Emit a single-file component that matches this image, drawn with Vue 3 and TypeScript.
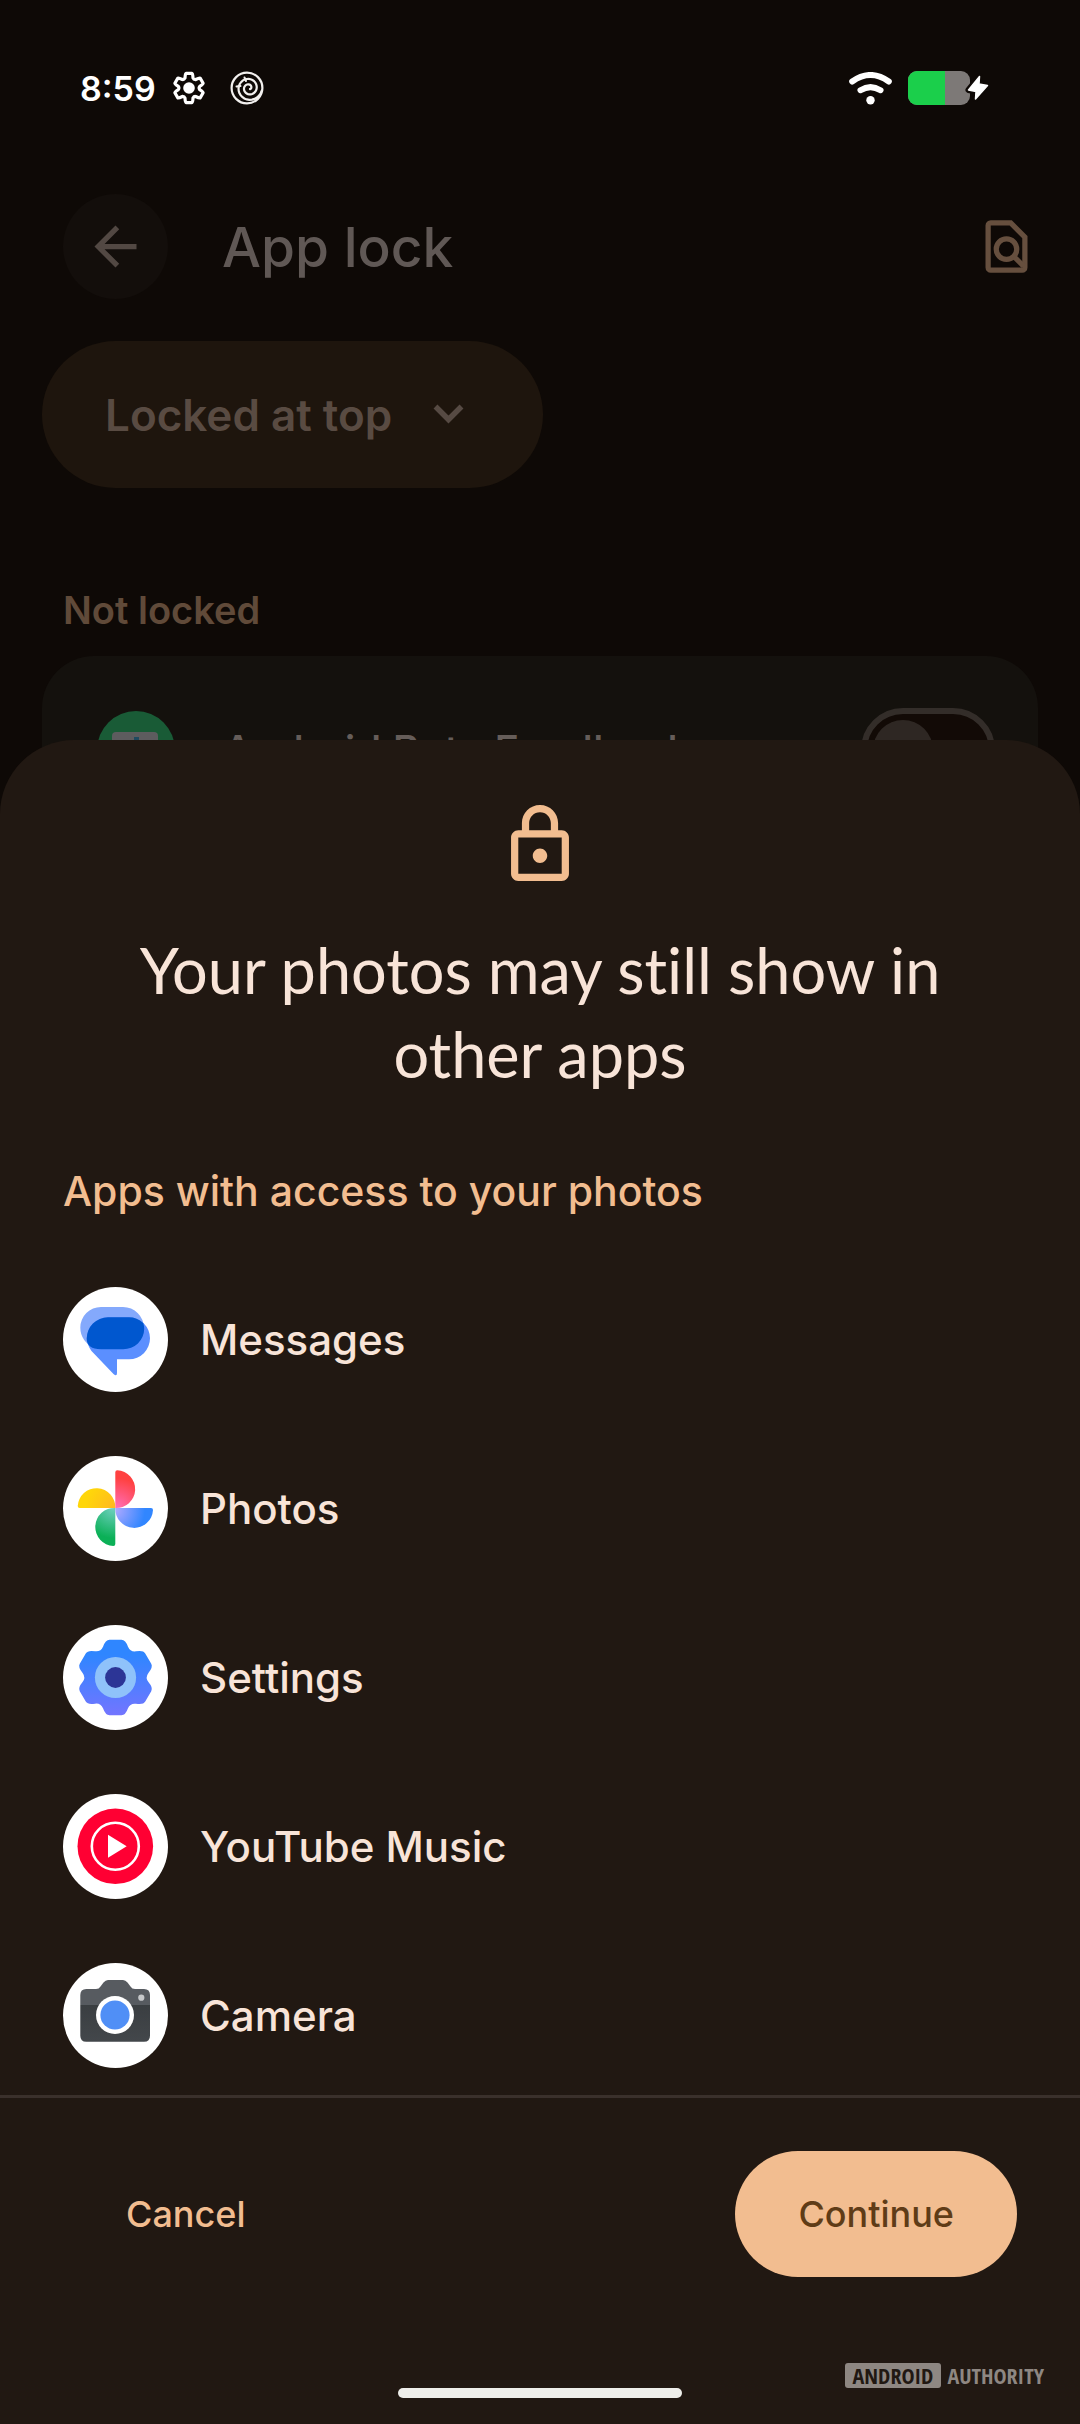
<script setup lang="ts">
import { ref } from 'vue'

type AppId = 'messages' | 'photos' | 'settings' | 'music' | 'camera'

const apps: { id: AppId; name: string }[] = [
  { id: 'messages', name: 'Messages' },
  { id: 'photos', name: 'Photos' },
  { id: 'settings', name: 'Settings' },
  { id: 'music', name: 'YouTube Music' },
  { id: 'camera', name: 'Camera' },
]

const sortOrder = ref('top')
const feedbackLocked = ref(false)

/* Six-toothed cog around (c, c); the tooth is described once and rotated. */
function cogPath(c: number, tooth: number[][]): string {
  const parts: string[] = []
  for (let k = 0; k < 6; k++) {
    const a = (k * Math.PI) / 3
    const p = tooth.map(([x, y]) => {
      const px = c + x * Math.cos(a) - y * Math.sin(a)
      const py = c + x * Math.sin(a) + y * Math.cos(a)
      return `${px.toFixed(2)} ${py.toFixed(2)}`
    })
    parts.push(`${k ? '' : `M${p[0]}`}Q${p[1]} ${p[2]}L${p[3]}Q${p[4]} ${p[5]}Q${p[6]} ${p[7]}`)
  }
  return parts.join('') + 'Z'
}

const softCog = cogPath(52.5, [
  [-12.5, -30.8], [-10, -37.8], [-6, -37.8], [6, -37.8], [10, -37.8], [12.5, -30.8], [14.75, -25.5], [20.4, -26.2],
])
const lineCog = cogPath(17, [
  [-4, -10], [-3.8, -14.6], [-3, -14.6], [3, -14.6], [3.8, -14.6], [4, -10], [4.6, -8.4], [6.66, -8.46],
])

/* Spiral that unwinds from its centre to the rim of the badge. */
const swirl = Array.from({ length: 60 }, (_, i) => {
  const t = i / 59
  const angle = 0.2 + (1 - t) * Math.PI * 4.2
  const r = 1.5 + 11.5 * t
  return `${i ? 'L' : 'M'}${(19 + r * Math.cos(angle)).toFixed(2)} ${(17 + r * Math.sin(angle)).toFixed(2)}`
}).join('')
</script>

<template>
  <div class="screen">
    <div class="page">
      <header class="status">
        <span class="clock">8:59</span>
        <svg class="cog" viewBox="0 0 34 34" aria-hidden="true">
          <path :d="lineCog" fill="none" stroke="#fff" stroke-width="3.2" stroke-linejoin="round" />
          <circle cx="17" cy="17" r="5.8" fill="#fff" />
        </svg>
        <svg class="badge" viewBox="0 0 34 34" aria-hidden="true" fill="none" stroke="#f2f0ee" stroke-linecap="round">
          <circle cx="17" cy="17" r="15.4" stroke-width="2.2" />
          <path :d="swirl" stroke-width="2.2" />
          <path d="M6.5 15.5l4-.5M14.5 6.5l1.5 3.5" stroke-width="2" />
        </svg>
        <svg class="wifi" viewBox="0 0 43 33" aria-hidden="true" fill="none" stroke="#fff" stroke-width="6" stroke-linecap="round">
          <path d="M3.2 9.5Q21.5-3.5 39.8 9.5" />
          <path d="M11.5 18.2Q21.5 12 31.5 18.2" />
          <circle cx="21.5" cy="28.3" r="4.2" fill="#fff" stroke="none" />
        </svg>
        <svg class="battery" viewBox="0 0 81 34" aria-hidden="true">
          <rect width="62" height="34" rx="9" fill="#7d7977" />
          <path d="M9 0H37V34H9A9 9 0 0 1 0 25V9A9 9 0 0 1 9 0Z" fill="#1bcf4b" />
          <path d="M71.5 5.5 60.5 19 68 20.5 67.5 28 79.5 14.5 71 13Z" fill="#0e0906" stroke="#0e0906" stroke-width="6" stroke-linejoin="round" />
          <path d="M71.5 5.5 60.5 19 68 20.5 67.5 28 79.5 14.5 71 13Z" fill="#fff" stroke="#fff" stroke-width="1.5" stroke-linejoin="round" />
        </svg>
      </header>

      <div class="toolbar">
        <button class="back" type="button" aria-label="Back">
          <svg viewBox="0 0 24 24" aria-hidden="true"><path d="M20 11H7.83l5.59-5.59L12 4l-8 8 8 8 1.41-1.41L7.83 13H20v-2z" fill="#524843" /></svg>
        </button>
        <h1 class="heading">App lock</h1>
        <button class="search" type="button" aria-label="Search in page">
          <svg viewBox="0 0 24 24" aria-hidden="true" fill="none" stroke="#664f3e" stroke-width="2">
            <path d="M6 3h7.6L19 8.400V20a1 1 0 0 1-1 1H6a1 1 0 0 1-1-1V4a1 1 0 0 1 1-1z" />
            <circle cx="12" cy="13" r="3.9" />
            <path d="M14.8 15.8 18.5 19.5" />
          </svg>
        </button>
      </div>

      <label class="sort">
        <select v-model="sortOrder" aria-label="Sort order">
          <option value="top">Locked at top</option>
        </select>
        <svg viewBox="0 0 31 21" aria-hidden="true"><path d="M2.5 2.5 15.5 15.5 28.5 2.5" fill="none" stroke="#564a43" stroke-width="5.5" /></svg>
      </label>

      <h2 class="group">Not locked</h2>
      <label class="entry">
        <svg class="entry-icon" viewBox="0 0 78 78" aria-hidden="true">
          <circle cx="39" cy="39" r="39" fill="#195b36" />
          <rect x="15" y="21" width="46" height="36" rx="4" fill="#5d5c5e" />
          <path d="M37 26h5v20h-5z" fill="#1f4a5f" />
        </svg>
        <span class="entry-name">Android Beta Feedback</span>
        <input v-model="feedbackLocked" class="toggle" type="checkbox" />
      </label>
    </div>

    <section class="sheet" role="dialog" aria-labelledby="sheet-title">
      <svg class="lock" viewBox="4 1 16 21" aria-hidden="true">
        <path d="M18 8h-1V6c0-2.76-2.24-5-5-5S7 3.24 7 6v2H6c-1.1 0-2 .9-2 2v10c0 1.1.9 2 2 2h12c1.1 0 2-.9 2-2V10c0-1.1-.9-2-2-2zM9 6c0-1.66 1.34-3 3-3s3 1.34 3 3v2H9V6zm9 14H6V10h12v10zm-6-3c1.1 0 2-.9 2-2s-.9-2-2-2-2 .9-2 2 .9 2 2 2z" fill="#f2bd90" />
      </svg>
      <h2 id="sheet-title" class="title">Your photos may still show in other apps</h2>
      <h3 class="subtitle">Apps with access to your photos</h3>

      <ul class="apps">
        <li v-for="app in apps" :key="app.id" class="app">
          <svg class="app-icon" viewBox="0 0 105 105" aria-hidden="true">
            <circle cx="52.5" cy="52.5" r="52.5" fill="#fff" />
            <g v-if="app.id === 'messages'">
              <path d="M38 20H60A21 21 0 0 1 60 62H32Q17.3 54 17.3 40.5A20.7 20.5 0 0 1 38 20Z" fill="#84a9fc" />
              <path d="M45 30.3H66A21 21 0 0 1 66 72.3H54V86Q54 90 50.5 87L28.5 64Q23.7 57 23.7 51.5A21.3 21.2 0 0 1 45 30.3Z" fill="#5b8fff" />
              <path d="M45 30.3H66Q74 30.3 80.2 36 81.3 39 81.2 42A21 20.5 0 0 1 60 62.3H38Q23.7 62 23.7 51.5A21.3 21.2 0 0 1 45 30.3Z" fill="#0057cf" />
            </g>
            <g v-else-if="app.id === 'photos'">
              <defs>
                <radialGradient id="petal-red" gradientUnits="userSpaceOnUse" cx="54" cy="52" r="30">
                  <stop offset="0" stop-color="#ff6fb8" /><stop offset="1" stop-color="#ff4141" />
                </radialGradient>
                <radialGradient id="petal-yellow" gradientUnits="userSpaceOnUse" cx="52" cy="52" r="30">
                  <stop offset="0" stop-color="#ffb81f" /><stop offset="1" stop-color="#ffd60a" />
                </radialGradient>
                <radialGradient id="petal-green" gradientUnits="userSpaceOnUse" cx="50" cy="52" r="30">
                  <stop offset="0" stop-color="#6fd0c0" /><stop offset="1" stop-color="#0bb057" />
                </radialGradient>
                <radialGradient id="petal-blue" gradientUnits="userSpaceOnUse" cx="52" cy="54" r="30">
                  <stop offset="0" stop-color="#b0a9ff" /><stop offset="1" stop-color="#3186ff" />
                </radialGradient>
              </defs>
              <path d="M52.3 52V16.3Q52.3 14.3 54.3 14.3A18.8 18.8 0 0 1 52.3 52Z" fill="url(#petal-red)" />
              <path d="M52.3 52H16.7Q14.7 52 14.7 50A18.8 18.8 0 0 1 52.3 52Z" fill="url(#petal-yellow)" />
              <path d="M52.3 52V88Q52.3 90 50.3 90A18.8 18.8 0 0 1 52.3 52Z" fill="url(#petal-green)" />
              <path d="M52.3 52H88Q90 52 90 54A18.8 18.8 0 0 1 52.3 52Z" fill="url(#petal-blue)" />
            </g>
            <g v-else-if="app.id === 'settings'">
              <defs>
                <linearGradient id="cog-fill" x1="0" y1="0" x2="0" y2="1">
                  <stop offset="0.2" stop-color="#2f86ff" /><stop offset="1" stop-color="#7375ff" />
                </linearGradient>
              </defs>
              <path :d="softCog" fill="url(#cog-fill)" />
              <circle cx="52.5" cy="52.5" r="20.6" fill="#8fc2fa" />
              <circle cx="52.5" cy="52.5" r="10.4" fill="#2c3596" />
            </g>
            <g v-else-if="app.id === 'music'">
              <circle cx="52.3" cy="52.3" r="37.8" fill="#ff0033" />
              <circle cx="52.3" cy="52.3" r="23.5" fill="none" stroke="#fff" stroke-width="2.6" />
              <path d="M45 40.7V63.7L63.7 52.3Z" fill="#fff" />
            </g>
            <g v-else>
              <defs>
                <linearGradient id="body-fill" x1="0" y1="0" x2="0" y2="1">
                  <stop offset="0" stop-color="#3a3e41" /><stop offset="1" stop-color="#43474b" />
                </linearGradient>
              </defs>
              <path d="M17.3 42V32Q17.3 26 23.3 26H33Q36 26 37.5 23.5L40.5 19.5Q42.5 17 45 17H60Q62.5 17 64.5 19.5L67.5 23.5Q69 26 72 26H81Q87 26 87 32V42Z" fill="#575b60" />
              <path d="M17.3 42H87V72.7Q87 78.7 81 78.7H23.3Q17.3 78.7 17.3 72.7Z" fill="url(#body-fill)" />
              <circle cx="52" cy="52" r="19" fill="#fff" />
              <circle cx="52" cy="52" r="14.6" fill="#508ff6" />
              <circle cx="78.3" cy="34.7" r="3.1" fill="#c6c8ca" />
            </g>
          </svg>
          <span>{{ app.name }}</span>
        </li>
      </ul>

      <div class="actions">
        <button class="btn text" type="button">Cancel</button>
        <button class="btn filled" type="button">Continue</button>
      </div>

      <footer class="footer">
        <div class="home-bar"></div>
        <div class="brand"><span class="brand-box">ANDROID</span><span>AUTHORITY</span></div>
      </footer>
    </section>
  </div>
</template>

<style>
body {
  margin: 0;
  background: #0e0906;
}
</style>

<style scoped>
.screen {
  display: grid;
  min-height: 100vh;
  background: #0e0906;
  font-family: Inter, Roboto, sans-serif;
  font-weight: 500;
}

.page,
.sheet {
  grid-area: 1 / 1;
  min-width: 0;
}

h1,
h2,
h3,
ul {
  margin: 0;
  padding: 0;
}

svg {
  display: block;
  flex: none;
}

button {
  border: 0;
  padding: 0;
  background: none;
  font: inherit;
  cursor: pointer;
}

/* dimmed page behind the sheet */
.status {
  display: flex;
  align-items: center;
  height: 176px;
  padding: 0 91px 0 80px;
}

.clock {
  color: #fff;
  font-size: 34px;
  font-weight: 600;
}

.cog,
.badge {
  width: 34px;
  height: 34px;
}

.cog {
  margin-left: 16px;
}

.badge {
  margin-left: 24px;
}

.wifi {
  width: 43px;
  height: 33px;
  margin-left: auto;
}

.battery {
  width: 81px;
  height: 34px;
  margin-left: 16px;
}

.toolbar {
  display: flex;
  align-items: center;
  margin-top: 18px;
  padding: 0 42px 0 63px;
}

.back {
  display: grid;
  place-items: center;
  width: 105px;
  height: 105px;
  border-radius: 50%;
  background: #130e0b;
}

.back svg,
.search svg {
  width: 63px;
  height: 63px;
}

.heading {
  margin-left: 54px;
  color: #605855;
  font-size: 55px;
  font-weight: 500;
}

.search {
  margin-left: auto;
}

.sort {
  display: flex;
  align-items: center;
  gap: 40px;
  width: fit-content;
  height: 147px;
  margin: 42px 0 0 42px;
  padding: 0 79px 0 63px;
  box-sizing: border-box;
  border-radius: 74px;
  background: #1e150d;
}

.sort select {
  appearance: none;
  border: 0;
  padding: 0;
  background: none;
  color: #594b42;
  font: inherit;
  font-size: 44px;
  font-weight: 600;
}

.sort svg {
  width: 31px;
  height: 21px;
}

.group {
  margin: 94px 63px 0;
  color: #604a39;
  font-size: 38px;
  font-weight: 600;
  line-height: 56px;
}

.entry {
  display: flex;
  align-items: center;
  height: 188px;
  margin: 18px 42px 0;
  padding: 0 43px 0 55px;
  box-sizing: border-box;
  border-radius: 52px 52px 12px 12px;
  background: #14110d;
}

.entry-icon {
  width: 78px;
  height: 78px;
}

.entry-name {
  margin-left: 48px;
  color: #655d59;
  font-size: 42px;
}

.toggle {
  appearance: none;
  width: 134px;
  height: 84px;
  margin: 0 0 0 auto;
  padding: 6px;
  box-sizing: border-box;
  border: 6px solid #332d29;
  border-radius: 42px;
  background: #120a06;
}

.toggle::before {
  content: '';
  display: block;
  width: 60px;
  height: 60px;
  border-radius: 50%;
  background: #2e2723;
}

/* bottom sheet */
.sheet {
  display: flex;
  flex-direction: column;
  align-self: end;
  z-index: 1;
  padding-top: 65px;
  border-radius: 74px 74px 0 0;
  background: #211812;
}

.lock {
  align-self: center;
  width: 58px;
  height: 76px;
}

.title {
  margin: 47px 120px 0;
  color: #f8e4d8;
  font-family: Lato, Inter, sans-serif;
  font-size: 63px;
  font-variant-ligatures: none;
  font-weight: 400;
  line-height: 84px;
  text-align: center;
}

.subtitle {
  margin: 67px 63px 0;
  color: #f2bd90;
  font-size: 41px;
  font-weight: 500;
  line-height: 56px;
}

.apps {
  display: flex;
  flex-direction: column;
  gap: 64px;
  margin: 68px 63px 27px;
  list-style: none;
}

.app {
  display: flex;
  align-items: center;
  gap: 32px;
  color: #f8e4d8;
  font-size: 42px;
}

.app-icon {
  width: 105px;
  height: 105px;
}

.actions {
  display: flex;
  justify-content: space-between;
  padding: 53px 63px 0;
  border-top: 3px solid #3a302b;
}

.btn {
  height: 126px;
  padding: 0 63px;
  border-radius: 63px;
  font-size: 36px;
}

.text {
  color: #f2bd90;
}

.filled {
  background: #f2bd90;
  color: #5f3c17;
}

.footer {
  display: grid;
  grid-template-columns: 1fr auto 1fr;
  align-items: end;
  height: 121px;
  padding-bottom: 26px;
}

.home-bar {
  grid-column: 2;
  width: 284px;
  height: 10px;
  border-radius: 5px;
  background: #eeeeea;
}

.brand {
  display: flex;
  align-items: center;
  justify-self: end;
  gap: 6px;
  margin: 0 36px 10px 0;
  color: #8e8782;
  font-family: 'Open Sans Condensed', 'Roboto Condensed', 'Open Sans', sans-serif;
  font-size: 22px;
  font-weight: 700;
  line-height: 25px;
}

.brand-box {
  padding: 0 8px;
  border-radius: 3px;
  background: #8e8782;
  color: #211812;
}
</style>
